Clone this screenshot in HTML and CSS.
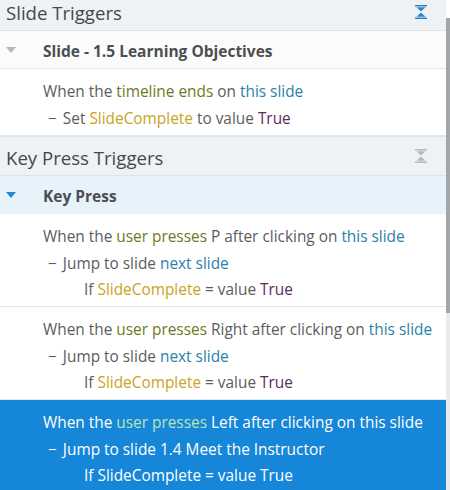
FILE: index.html
```html
<!DOCTYPE html>
<html>
<head>
<meta charset="utf-8">
<link rel="stylesheet" href="styles.css">
</head>
<body>
<div class="panel">
  <div class="main">
    <div class="section-head first">
      <span class="title">Slide Triggers</span>
      <svg class="collapse" width="14" height="16" viewBox="0 0 14 16"><path d="M1 1h12v1.4H1z M2.5 3.2h9L7 7.6z M2.5 12.8h9L7 8.4z M1 13.6h12V15H1z" fill="#2a86d1"/></svg>
    </div>
    <div class="group">
      <svg class="caret" width="10" height="6" viewBox="0 0 10 6"><path d="M0 0h10L5 6z" fill="#b3b7bb"/></svg>
      <span class="group-title">Slide - 1.5 Learning Objectives</span>
    </div>
    <div class="item short">
      <div class="line">When the <span class="ev">timeline ends</span> on <span class="obj">this slide</span></div>
      <div class="line act"><span class="dash">−</span> Set <span class="var">SlideComplete</span> to value <span class="val">True</span></div>
    </div>
    <div class="section-head">
      <span class="title">Key Press Triggers</span>
      <svg class="collapse" width="14" height="16" viewBox="0 0 14 16"><path d="M1 1h12v1.4H1z M2.5 3.2h9L7 7.6z M2.5 12.8h9L7 8.4z M1 13.6h12V15H1z" fill="#b4b8bc"/></svg>
    </div>
    <div class="group active">
      <svg class="caret" width="10" height="6" viewBox="0 0 10 6"><path d="M0 0h10L5 6z" fill="#2a86d1"/></svg>
      <span class="group-title">Key Press</span>
    </div>
    <div class="item">
      <div class="line">When the <span class="ev">user presses</span> P after clicking on <span class="obj">this slide</span></div>
      <div class="line act"><span class="dash">−</span> Jump to slide <span class="obj">next slide</span></div>
      <div class="line cond">If <span class="var">SlideComplete</span> = value <span class="val">True</span></div>
    </div>
    <div class="item">
      <div class="line">When the <span class="ev">user presses</span> Right after clicking on <span class="obj">this slide</span></div>
      <div class="line act"><span class="dash">−</span> Jump to slide <span class="obj">next slide</span></div>
      <div class="line cond">If <span class="var">SlideComplete</span> = value <span class="val">True</span></div>
    </div>
    <div class="item selected">
      <div class="line">When the <span class="ev">user presses</span> Left after clicking on <span class="obj">this slide</span></div>
      <div class="line act"><span class="dash">−</span> Jump to slide <span class="obj">1.4 Meet the Instructor</span></div>
      <div class="line cond">If <span class="var">SlideComplete</span> = value <span class="val">True</span></div>
    </div>
  </div>
  <div class="scrollbar"><div class="thumb"></div></div>
</div>
</body>
</html>
```

FILE: styles.css
```css
html, body {
  margin: 0;
  padding: 0;
  background: #ffffff;
  overflow: hidden;
}
body {
  font-family: "Open Sans", "Noto Sans", sans-serif;
  color: #5a5d60;
}
.panel {
  display: flex;
  width: 450px;
  height: 490px;
  overflow: hidden;
}
.main {
  flex: 1;
  min-width: 0;
}
.scrollbar {
  width: 4px;
  display: flex;
  flex-direction: column;
  background: #e9eaec;
  padding-top: 18px;
  box-sizing: border-box;
  background-image: linear-gradient(#ffffff, #ffffff);
  background-size: 100% 18px;
  background-repeat: no-repeat;
}
.thumb {
  height: 295px;
  background: #a2a6aa;
}
.section-head {
  display: flex;
  align-items: center;
  justify-content: space-between;
  height: 40px;
  background: #eff2f5;
  border-bottom: 1px solid #dfe3e7;
  border-top: 1px solid #dfe3e7;
  padding: 3px 18px 0 6px;
  box-sizing: border-box;
}
.section-head .collapse {
  margin-top: -3px;
}
.section-head.first {
  height: 31px;
  border-top: none;
  align-items: flex-start;
  padding-top: 0;
}
.section-head.first .collapse {
  margin-top: 4px;
}
.title {
  font-size: 18.6px;
  line-height: 26px;
  color: #45484b;
}
.group {
  display: flex;
  align-items: center;
  height: 38px;
  padding-top: 2px;
  background: #fbfbfb;
  border-bottom: 1px solid #e3e5e7;
  box-sizing: border-box;
}
.group .caret {
  margin-top: -2px;
}
.group.active {
  background: #e6f3fb;
  border-bottom: none;
}
.caret {
  margin-left: 6px;
  margin-right: 27px;
}
.group-title {
  font-size: 15.5px;
  font-weight: 700;
  color: #4b4e51;
}
.item {
  padding: 10px 0 2.5px 43px;
  border-bottom: 1px solid #e3e5e7;
}
.item.short {
  padding-bottom: 3px;
}
.line {
  font-size: 15.4px;
  line-height: 26.5px;
  height: 26.5px;
  white-space: nowrap;
}
.line.act {
  padding-left: 5px;
}
.line.cond {
  padding-left: 41px;
}
.dash {
  margin-right: 2px;
}
.ev { color: #6d7b1d; }
.obj { color: #2a7faa; }
.var { color: #c9a41c; }
.val { color: #5e2a5e; }
.item.selected {
  background: #1686d8;
  color: #ffffff;
  border-bottom: none;
}
.item.selected .ev { color: #b6e6b4; }
.item.selected .obj,
.item.selected .var,
.item.selected .val { color: #ffffff; }
```
